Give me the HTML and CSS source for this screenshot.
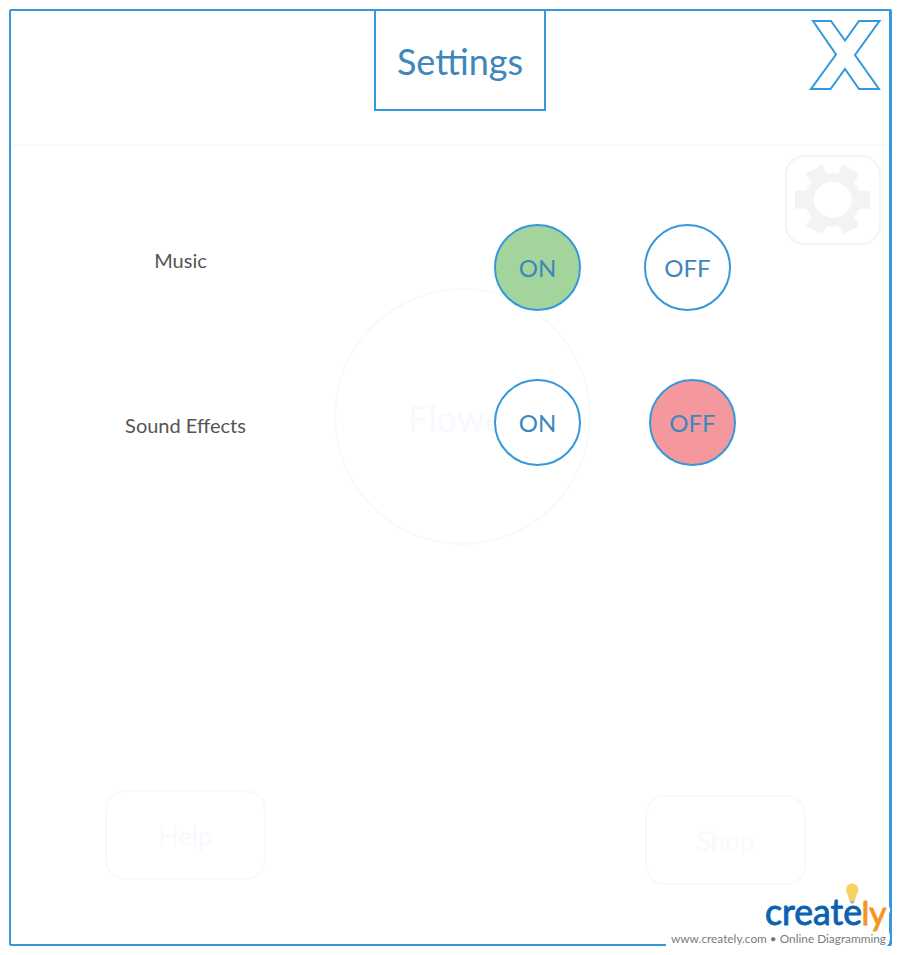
FILE: index.html
```html
<!DOCTYPE html>
<html lang="en">
<head>
<meta charset="utf-8">
<title>Settings</title>
<link rel="stylesheet" href="styles.css">
</head>
<body>
<main class="frame">
  <div class="backdrop" aria-hidden="true">
    <div class="topbar"></div>
    <div class="gear-box">
      <svg class="gear" viewBox="75 76 225 207"><path fill-rule="evenodd" d="M108 102 156 76 172 102Q188 99 204 102L220 76 268 102 252 128Q262 140 267 153H300V207H267Q262 220 252 233L268 258 220 283 204 258Q188 260 172 258L156 283 108 258 124 233Q114 220 109 207H75V153H109Q114 140 124 128ZM131 180A57 54 0 1 0 245 180A57 54 0 1 0 131 180Z"/></svg>
    </div>
    <div class="flower"><span>Flower</span></div>
    <div class="bottom-buttons">
      <div class="ghost-button">Help</div>
      <div class="ghost-button shop">Shop</div>
    </div>
  </div>
  <header class="header">
    <h1 class="title">Settings</h1>
    <svg class="close" width="74" height="74" viewBox="808 18 74 74"><path d="M813 21H831L845 40.5 859 21H879.5L855 55 879 89H859L845 69 830.5 89H811L836 54.5Z"/></svg>
  </header>
  <section class="row music">
    <div class="label">Music</div>
    <div class="toggle on">ON</div>
    <div class="toggle">OFF</div>
  </section>
  <section class="row effects">
    <div class="label">Sound Effects</div>
    <div class="toggle">ON</div>
    <div class="toggle off">OFF</div>
  </section>
  <footer class="credit">
    <svg class="logo" width="226" height="66" viewBox="666 882 226 66">
      <path class="mask" d="M666 931H887Q890 931 890 937T887 946V948H666ZM886 905Q890 905 890 910T886 915Z"/>
      <text class="wordmark" x="765" y="925" textLength="97" lengthAdjust="spacingAndGlyphs">create</text>
      <text class="wordmark accent" x="861.500" y="925" textLength="25" lengthAdjust="spacingAndGlyphs">ly</text>
      <path class="bulb" d="M848.8 900C849 895 846 893.500 846 889.500A6.200 6 0 0 1 858.400 889.500C858.400 893.500 855.400 895 855.400 900Z"/>
      <path class="bulb-base" d="M849.500 900.500H855L853.500 903.500H851Z"/>
      <text class="tagline" x="671" y="943" textLength="215" lengthAdjust="spacingAndGlyphs">www.creately.com • Online Diagramming</text>
    </svg>
  </footer>
</main>
</body>
</html>
```
FILE: styles.css
```css
* { box-sizing: border-box; }
body {
  margin: 0;
  padding: 9px;
  background: #fff;
  font-family: Lato, sans-serif;
}
.frame {
  position: relative;
  width: 883px;
  height: 937px;
  border: 2px solid #3498db;
  border-right-width: 3px;
  border-radius: 2px;
}
.backdrop {
  position: absolute;
  inset: 0;
  display: flex;
  flex-direction: column;
  color: #f6fafe;
}
.topbar { height: 135px; border-bottom: 2px solid #f5faff; }
.gear-box {
  align-self: flex-end;
  display: flex;
  width: 96px;
  height: 90px;
  margin: 9px 8px 0 0;
  padding: 8px 9px 0 8px;
  border: 2px solid #f4f4f4;
  border-radius: 20px;
}
.gear { width: 75px; height: 69px; fill: #f3f3f3; }
.flower {
  width: 257px;
  height: 257px;
  margin: 43px 0 0 323px;
  border: 2px solid #f5fafe;
  border-radius: 50%;
  font-size: 36px;
  line-height: 257px;
  text-align: center;
}
.bottom-buttons { display: flex; gap: 379px; margin: 245px 0 0 94px; }
.ghost-button {
  width: 161px;
  height: 90px;
  border: 2px solid #f9f9f9;
  border-radius: 20px;
  font-size: 26px;
  line-height: 88px;
  text-align: center;
}
.shop { margin-top: 5px; }
.header {
  position: relative;
  display: flex;
  justify-content: space-between;
  height: 100px;
  padding: 0 7px 0 363px;
}
.title {
  width: 172px;
  height: 100px;
  margin: 0;
  border: 2px solid #3498db;
  border-top: 0;
  font-size: 36px;
  font-weight: 400;
  line-height: 101px;
  text-align: center;
  color: #3d87bd;
}
.close { margin-top: 7px; fill: none; stroke: #3498db; stroke-width: 2; }
.row {
  position: relative;
  display: grid;
  grid-template-columns: 337px 87px 87px;
}
.music { margin-top: 113px; column-gap: 63px; padding-left: 83px; }
.effects { margin-top: 68px; column-gap: 68px; padding-left: 78px; }
.label {
  width: 173px;
  font-size: 20px;
  line-height: 73px;
  text-align: center;
  color: #555;
}
.effects .label { width: 193px; line-height: 93px; }
.toggle {
  width: 87px;
  height: 87px;
  border: 2px solid #3498db;
  border-radius: 50%;
  background: #fff;
  font-size: 24px;
  line-height: 84px;
  text-align: center;
  color: #3d87bd;
}
.on { background: #a3d49c; }
.off { background: #f5989d; }
.credit { position: absolute; right: -3px; bottom: -4px; }
.logo { display: block; }
.mask { fill: #fff; }
.wordmark {
  font-size: 36px;
  fill: #0a62b0;
  stroke: #0a62b0;
  stroke-width: 0.9px;
  stroke-linejoin: round;
}
.wordmark.accent { font-size: 33px; fill: #f7941e; stroke: #f7941e; }
.bulb { fill: #f7d060; }
.bulb-base { fill: #aaa; }
.tagline { font-size: 12px; fill: #7c7c7c; }
```
